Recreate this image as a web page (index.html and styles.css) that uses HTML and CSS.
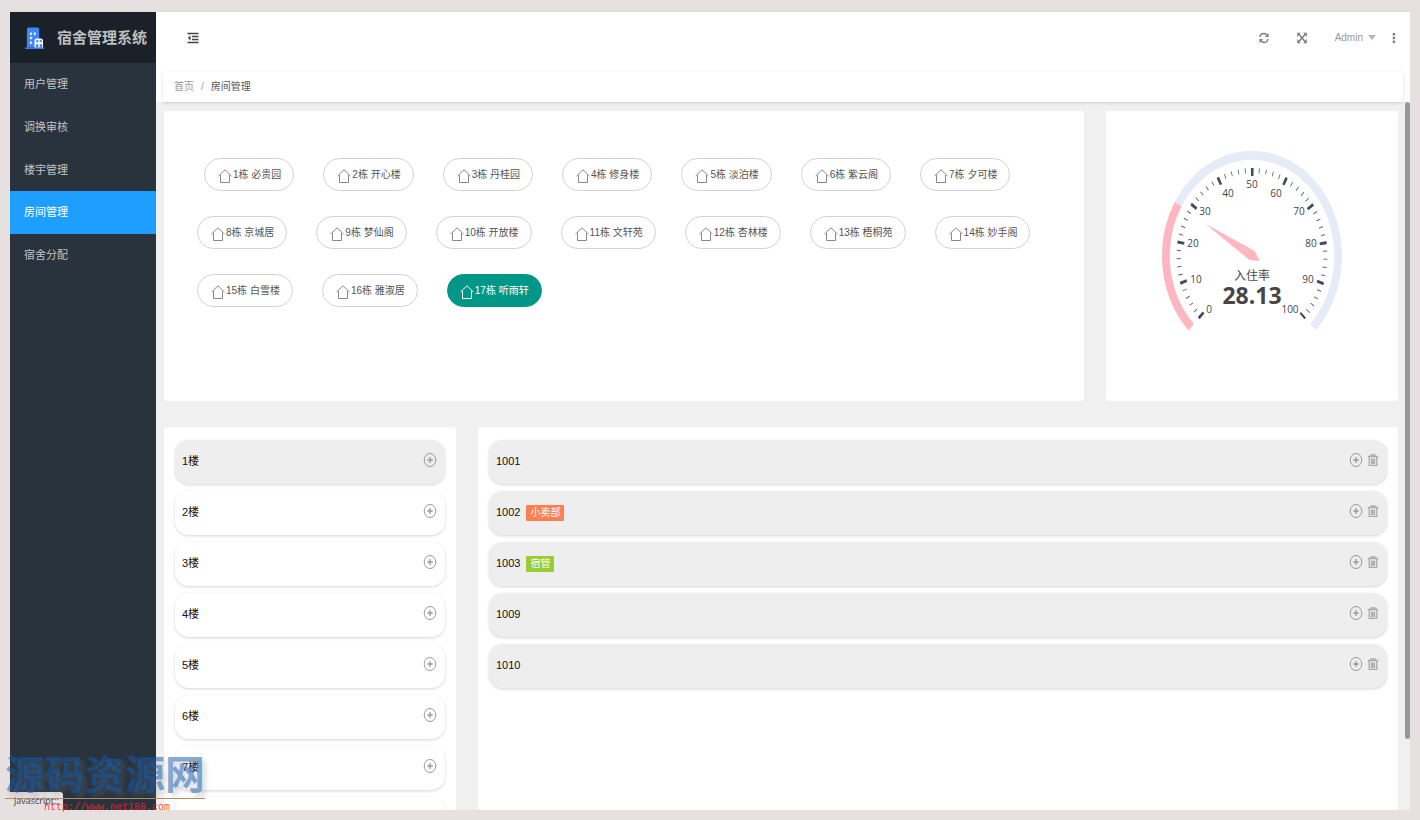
FILE: index.html
```html
<!DOCTYPE html>
<html lang="zh-CN">
<head>
<meta charset="utf-8">
<title>宿舍管理系统</title>
<link rel="stylesheet" href="styles.css">
</head>
<body>
<svg class="sprite" aria-hidden="true">
  <symbol id="home" viewBox="0 0 14 14"><path d="M.5 7 7 .800l6.500 6.200M2.500 6v7.500h9V6" fill="none" stroke="currentColor"/></symbol>
  <symbol id="plus" viewBox="0 0 14 14"><ellipse cx="7" cy="7" rx="5.800" ry="6.500" fill="none" stroke="currentColor"/><path d="M7 4v6M4.300 7h5.400" fill="none" stroke="currentColor" stroke-width="1.300"/></symbol>
  <symbol id="trash" viewBox="0 0 12 14"><path d="M4 3V1.800h4V3M.8 3.500h10.400M2.200 4v8.300h7.600V4M4.500 5.500v5.500M6 5.500v5.500M7.500 5.500v5.500" fill="none" stroke="currentColor" stroke-width="1.300"/></symbol>
</svg>
<div class="app">
  <aside class="sidebar">
    <div class="brand">
      <svg class="brand-icon" viewBox="0 0 20 24" aria-hidden="true"><path d="M2 22V3q0-2 2-2h9q2 0 2 2v19z" fill="#3f86fb"/><path d="M0 22h20v1.500H0z" fill="#3f86fb"/><path d="M5.500 6.500h1.500v2H5.500zM9.500 6.500H11v2H9.500zM5.500 11h1.500v2H5.500zM5.500 16h1.500v2H5.500z" fill="#fff" stroke="#fff" stroke-width=".5"/><path d="M10 22v-7q0-2.500 2.500-2.500h4q2.500 0 2.500 2.500v7z" fill="#fff"/><path d="M12 14h2v2.500h-2zM15.500 14h2v2.500h-2zM11.500 18.500H14V22h-2.500zM15.500 18.500H18V22h-2.500z" fill="#3f86fb"/></svg>
      <span>宿舍管理系统</span>
    </div>
    <nav class="menu">
      <a href="#">用户管理</a>
      <a href="#">调换审核</a>
      <a href="#">楼宇管理</a>
      <a href="#" class="active">房间管理</a>
      <a href="#">宿舍分配</a>
    </nav>
  </aside>
  <div class="main">
    <header class="topbar">
      <button type="button" class="tool" aria-label="收起菜单"><svg width="12" height="12" viewBox="0 0 12 12"><path d="M.5 1.500h11M5 4.500h6.500M5 7.500h6.500M.5 10.500h11" fill="none" stroke="#444" stroke-width="1.500"/><path d="M3.500 3.500v5L.8 6z" fill="#444"/></svg></button>
      <div class="tools">
        <button type="button" class="tool" aria-label="刷新"><svg width="10" height="12" viewBox="0 0 10 12"><path d="M1 5q.5-3.500 4-3.500 2 0 3.500 2M9 7q-.5 3.500-4 3.500-2 0-3.500-2" fill="none" stroke="#808080" stroke-width="1.500"/><path d="M9.600 1v4H6zM.4 11V7H4z" fill="#808080"/></svg></button>
        <button type="button" class="tool" aria-label="全屏"><svg width="10" height="12" viewBox="0 0 10 12"><path d="M2 2.500l6 7M8 2.500l-6 7" stroke="#808080" stroke-width="1.600"/><path d="M.2.800h3.600L.2 5zM9.800.800v4.200L6.200.800zM.2 11.200V7l3.600 4.200zM9.800 11.200H6.200L9.800 7z" fill="#808080"/></svg></button>
        <button type="button" class="tool user">Admin<i class="caret"></i></button>
        <button type="button" class="tool" aria-label="更多"><svg width="4" height="12" viewBox="0 0 4 12"><path d="M.7 1h2.400v2.400H.7zM.7 4.800h2.400v2.400H.7zM.7 8.600h2.400V11H.7z" fill="#808080"/></svg></button>
      </div>
    </header>
    <div class="crumb-wrap"><nav class="crumb"><a href="#">首页</a><span>/</span><b>房间管理</b></nav></div>
    <div class="scroll">
      <div class="grid">
        <section class="panel buildings">
          <button type="button" class="pill"><svg><use href="#home"/></svg>1栋 必贵园</button>
          <button type="button" class="pill"><svg><use href="#home"/></svg>2栋 开心楼</button>
          <button type="button" class="pill"><svg><use href="#home"/></svg>3栋 丹桂园</button>
          <button type="button" class="pill"><svg><use href="#home"/></svg>4栋 修身楼</button>
          <button type="button" class="pill"><svg><use href="#home"/></svg>5栋 淡泊楼</button>
          <button type="button" class="pill"><svg><use href="#home"/></svg>6栋 紫云阁</button>
          <button type="button" class="pill"><svg><use href="#home"/></svg>7栋 夕可楼</button>
          <button type="button" class="pill"><svg><use href="#home"/></svg>8栋 京城居</button>
          <button type="button" class="pill"><svg><use href="#home"/></svg>9栋 梦仙阁</button>
          <button type="button" class="pill"><svg><use href="#home"/></svg>10栋 开放楼</button>
          <button type="button" class="pill"><svg><use href="#home"/></svg>11栋 文轩苑</button>
          <button type="button" class="pill"><svg><use href="#home"/></svg>12栋 杏林楼</button>
          <button type="button" class="pill"><svg><use href="#home"/></svg>13栋 梧桐苑</button>
          <button type="button" class="pill"><svg><use href="#home"/></svg>14栋 妙手阁</button>
          <button type="button" class="pill"><svg><use href="#home"/></svg>15栋 白雪楼</button>
          <button type="button" class="pill"><svg><use href="#home"/></svg>16栋 雅淑居</button>
          <button type="button" class="pill selected"><svg><use href="#home"/></svg>17栋 听雨轩</button>
        </section>
        <section class="panel rate">
          <svg class="gauge" viewBox="-110 -110 220 220" role="img" aria-label="入住率 28.13">
            <g transform="scale(.857 1)" fill="none">
              <path d="M-71 71A100.500 100.500 0 1 1 71 71" stroke="#e6ebf8" stroke-width="9"/>
              <path d="M-71 71A100.500 100.500 0 0 1-86.200-51.700" stroke="#ffb6c1" stroke-width="9"/>
              <path d="M-60.100 60.800A85.500 85.500 0 1 1 60.100 60.800" stroke="#63677a" stroke-width="5" stroke-dasharray="1 7.058"/>
              <path d="M-58.300 60.400A84 84 0 1 1 58.300 60.400" stroke="#464b60" stroke-width="8" stroke-dasharray="3 36.580"/>
              <path d="M-54-32 3-5 9 5-3 4z" fill="#ffb6c1"/>
            </g>
            <g class="scale">
              <text x="-43" y="57">0</text><text x="-56" y="27">10</text><text x="-59" y="-9">20</text><text x="-47" y="-41">30</text><text x="-24" y="-59">40</text><text x="0" y="-68">50</text><text x="24" y="-59">60</text><text x="47" y="-41">70</text><text x="59" y="-9">80</text><text x="56" y="27">90</text><text x="38" y="57">100</text>
            </g>
            <text class="rate-name" x="0" y="24">入住率</text>
            <text class="rate-value" x="0" y="48">28.13</text>
          </svg>
        </section>
        <section class="panel floors">
          <ul class="list">
            <li class="current"><span>1楼</span><button type="button" class="act" aria-label="添加"><svg><use href="#plus"/></svg></button></li>
            <li><span>2楼</span><button type="button" class="act" aria-label="添加"><svg><use href="#plus"/></svg></button></li>
            <li><span>3楼</span><button type="button" class="act" aria-label="添加"><svg><use href="#plus"/></svg></button></li>
            <li><span>4楼</span><button type="button" class="act" aria-label="添加"><svg><use href="#plus"/></svg></button></li>
            <li><span>5楼</span><button type="button" class="act" aria-label="添加"><svg><use href="#plus"/></svg></button></li>
            <li><span>6楼</span><button type="button" class="act" aria-label="添加"><svg><use href="#plus"/></svg></button></li>
            <li><span>7楼</span><button type="button" class="act" aria-label="添加"><svg><use href="#plus"/></svg></button></li>
            <li></li>
          </ul>
        </section>
        <section class="panel rooms">
          <ul class="list">
            <li class="current"><span>1001</span><button type="button" class="act" aria-label="添加"><svg><use href="#plus"/></svg></button><button type="button" class="act del" aria-label="删除"><svg><use href="#trash"/></svg></button></li>
            <li class="current"><span>1002</span><em class="tag shop">小卖部</em><button type="button" class="act" aria-label="添加"><svg><use href="#plus"/></svg></button><button type="button" class="act del" aria-label="删除"><svg><use href="#trash"/></svg></button></li>
            <li class="current"><span>1003</span><em class="tag keeper">宿管</em><button type="button" class="act" aria-label="添加"><svg><use href="#plus"/></svg></button><button type="button" class="act del" aria-label="删除"><svg><use href="#trash"/></svg></button></li>
            <li class="current"><span>1009</span><button type="button" class="act" aria-label="添加"><svg><use href="#plus"/></svg></button><button type="button" class="act del" aria-label="删除"><svg><use href="#trash"/></svg></button></li>
            <li class="current"><span>1010</span><button type="button" class="act" aria-label="添加"><svg><use href="#plus"/></svg></button><button type="button" class="act del" aria-label="删除"><svg><use href="#trash"/></svg></button></li>
          </ul>
        </section>
      </div>
      <div class="track"><div class="thumb"></div></div>
    </div>
  </div>
</div>
<div class="status">javascript:;</div>
<div class="watermark"><strong>源码资源网</strong><span>http://www.net188.com</span></div>
</body>
</html>
```

FILE: styles.css
```css
* { box-sizing: border-box; }
body {
  margin: 0;
  height: 100vh;
  padding: 10px;
  position: relative;
  overflow: hidden;
  background: #e6e0e0;
  color: #333;
  font: 11px/16px "Liberation Sans", "Noto Sans CJK SC", sans-serif;
}
a { color: inherit; text-decoration: none; }
button { font: inherit; color: inherit; background: none; border: 0; padding: 0; }
.sprite { position: absolute; width: 0; height: 0; }

.app {
  display: flex;
  height: 100%;
  overflow: hidden;
  border-top: 2px solid #dedede;
  background: #f0f0f0;
}

.sidebar { flex: 0 0 146px; background: #28333e; color: #c0c3c6; }
.brand {
  display: flex;
  align-items: center;
  gap: 13px;
  height: 51px;
  padding-left: 15px;
  background: #1b2128;
  color: #bfbfbf;
  font-size: 15px;
  font-weight: bold;
  line-height: 24px;
  white-space: nowrap;
}
.brand-icon { width: 19px; height: 24px; }
.menu a { display: block; padding: 0 14px; line-height: 43px; height: 43px; }
.menu a:nth-child(3n) { height: 42px; }
.menu .active { background: #1e9fff; color: #fff; }

.main { flex: 1; min-width: 0; display: flex; flex-direction: column; }
.topbar {
  display: flex;
  justify-content: space-between;
  align-items: center;
  height: 51px;
  padding: 0 14px 0 31px;
  background: #fff;
  color: #999;
}
.tool { display: flex; align-items: center; }
.tools { display: flex; align-items: center; }
.tools .tool { margin-left: 28px; }
.tools .tool:last-child { margin-left: 16px; }
.tools .user { font-size: 10px; }
.caret { margin-left: 5px; border: 4px solid transparent; border-top: 5px solid #b5b5b5; border-bottom: 0; }
.crumb-wrap { padding: 9px 7px 0; background: #fff; }
.crumb {
  display: flex;
  gap: 7px;
  height: 30px;
  padding-left: 11px;
  align-items: center;
  background: #fff;
  box-shadow: 0 1px 3px rgba(0, 0, 0, .15);
  color: #999;
  font-size: 10px;
}
.crumb b { color: #555; font-weight: normal; }

.scroll { flex: 1; min-height: 0; display: flex; overflow: hidden; }
.grid {
  flex: 1;
  display: grid;
  grid-template-columns: repeat(12, minmax(0, 1fr));
  grid-template-rows: 290px 1fr;
  gap: 26px 22px;
  padding: 9px 7px 0 8px;
}
.track { flex: 0 0 5px; }
.thumb { height: 90%; border-radius: 3px; background: #96999c; }
.panel { background: #fff; border-radius: 3px; min-height: 0; }
.buildings { grid-column: span 9; }
.rate { grid-column: span 3; }
.floors { grid-column: span 3; }
.rooms { grid-column: span 9; }

.buildings {
  display: flex;
  flex-wrap: wrap;
  align-content: flex-start;
  gap: 25px 29px;
  padding: 47px 33px;
}
.pill {
  display: flex;
  align-items: center;
  gap: 1px;
  height: 33px;
  padding: 0 12px 0 13px;
  border: 1px solid #d2d2d2;
  border-radius: 17px;
  color: #555;
  font-size: 10px;
  white-space: nowrap;
}
.pill:first-child { margin-left: 7px; }
.pill svg { width: 14px; height: 14px; color: #888; margin-top: 2px; }
.pill.selected { padding-left: 12px; background: #009688; border-color: #009688; color: #fff; }
.pill.selected svg { color: #fff; }

.rate { display: flex; align-items: center; justify-content: center; }
.gauge { width: 220px; height: 220px; }
.gauge text { text-anchor: middle; fill: #464646; font-family: "Open Sans", "Noto Sans CJK SC", sans-serif; }
.scale text { font-size: 10px; }
.gauge .rate-name { font-size: 12px; }
.gauge .rate-value { font-size: 23px; font-weight: bold; }

.list { list-style: none; margin: 0; padding: 13px 11px; display: grid; gap: 7px; }
.floors, .rooms { overflow: hidden; }
.list li {
  display: flex;
  align-items: center;
  height: 44px;
  padding: 0 8px 3px 7px;
  border-radius: 14px;
  box-shadow: 0 1px 3px rgba(0, 0, 0, .17);
  color: #111;
}
.list .current { background: #eee; }
.list span { margin-right: auto; }
.list span:has(+ .tag) { margin-right: 6px; }
.tag {
  margin: 3px auto 0 0;
  padding: 0 4px;
  border-radius: 1px;
  color: #fff;
  font-size: 10px;
  font-style: normal;
}
.shop { background: #ff7f50; }
.keeper { background: #9acd32; }
.act { color: #999; display: flex; padding-bottom: 1px; }
.act svg { width: 14px; height: 14px; }
.act.del { margin-left: 4px; color: #aaa; }
.act.del svg { width: 12px; }

.status {
  position: absolute;
  left: 10px;
  bottom: 10px;
  padding: 0 4px;
  border-radius: 0 3px 0 0;
  background: #e6e0e0;
  color: #444;
  font: 9px/18px "Open Sans", sans-serif;
}
.watermark { position: absolute; left: 5px; bottom: 4px; width: 200px; text-align: center; }
.watermark strong {
  display: block;
  border-bottom: 1px solid #b08d68;
  color: rgba(15, 92, 180, .52);
  font-size: 40px;
  line-height: 46px;
  white-space: nowrap;
  text-shadow: 4px 4px 4px rgba(128, 128, 128, .25);
}
.watermark span {
  display: block;
  padding-left: 4px;
  color: rgba(255, 30, 30, .85);
  font: 10px/17px "Liberation Mono", monospace;
}
```
